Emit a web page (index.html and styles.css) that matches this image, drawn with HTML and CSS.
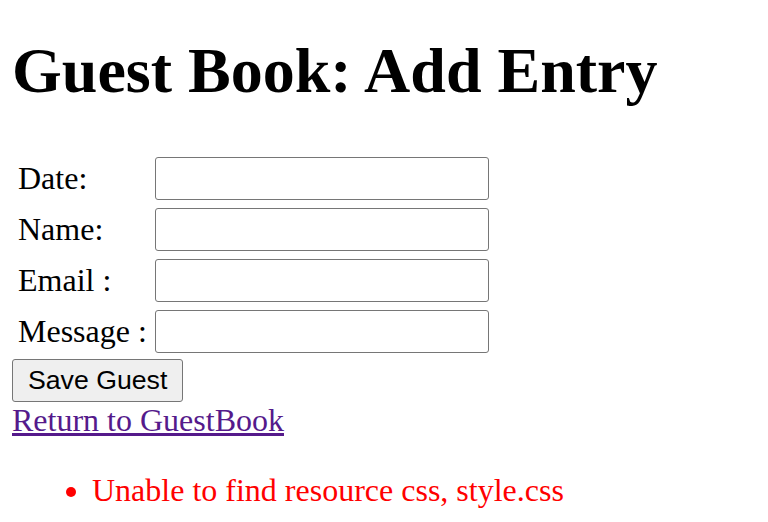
FILE: index.html
```html
<!DOCTYPE html>
<html>
<head>
<meta charset="utf-8">
<title>Guest Book: Add Entry</title>
<link rel="stylesheet" href="styles.css">
</head>
<body>
<h1 class="title">Guest Book: Add Entry</h1>
<form class="form">
<table class="fields">
<tr><td class="label">Date:</td><td class="cell"><input class="field" type="text"></td></tr>
<tr><td class="label">Name:</td><td class="cell"><input class="field" type="text"></td></tr>
<tr><td class="label">Email :</td><td class="cell"><input class="field" type="text"></td></tr>
<tr><td class="label">Message :</td><td class="cell"><input class="field" type="text"></td></tr>
</table>
<button class="save" type="button">Save Guest</button>
</form>
<a class="back" href="#">Return to GuestBook</a>
<ul class="errors"><li>Unable to find resource css, style.css</li></ul>
</body>
</html>
```
FILE: styles.css
```css
html, body { margin: 0; padding: 0; }
body {
  padding: 12px;
  font-family: "Liberation Serif", "Times New Roman", serif;
  font-size: 32px;
  line-height: 1.15;
  color: #000;
  background: #fff;
}
.title {
  font-size: 64px;
  font-weight: bold;
  margin: 22px 0 43px;
  line-height: 1.15;
}
.form { margin: 0; }
.fields {
  border-collapse: separate;
  border-spacing: 3px 4px;
  margin: 0;
}
.fields td { padding: 2px 3px; }
.fields .label { vertical-align: middle; white-space: nowrap; padding-right: 3px; }
.fields .cell { padding-left: 2px; }
.field {
  display: block;
  width: 334px;
  height: 43px;
  box-sizing: border-box;
  border: 1px solid #767676;
  border-radius: 3px;
  font-size: 26px;
  margin: 0;
}
.save {
  display: block;
  margin-top: 0;
  height: 43px;
  padding: 0 15px;
  font-family: Arial, "Liberation Sans", sans-serif;
  font-size: 26.67px;
  background: #efefef;
  border: 1px solid #767676;
  border-radius: 3px;
  color: #000;
}
.back { color: #551a8b; text-decoration: underline; }
.errors {
  color: #f00;
  margin: 34px 0 0;
  padding-left: 80px;
}
```
